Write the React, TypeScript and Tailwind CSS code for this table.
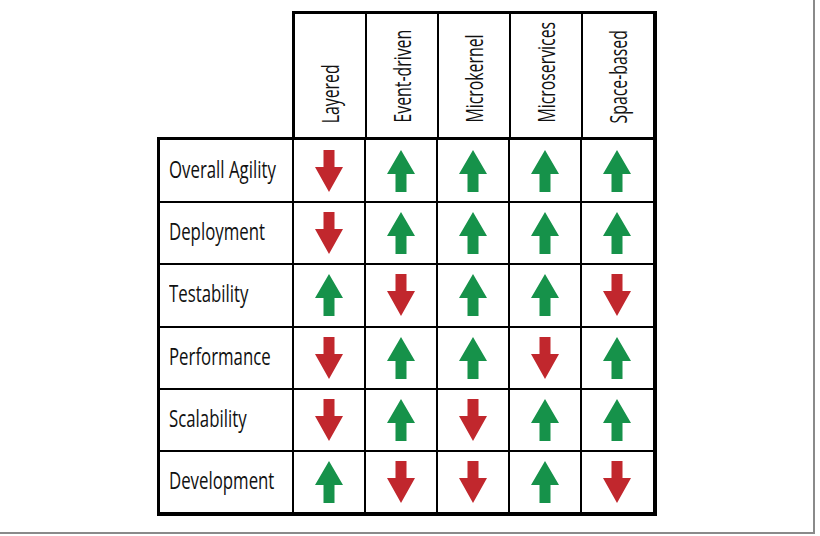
import React from "react";

const cols = ["Layered", "Event-driven", "Microkernel", "Microservices", "Space-based"];
const rows: [string, string][] = [
  ["Overall Agility", "DUUUU"],
  ["Deployment", "DUUUU"],
  ["Testability", "UDUUD"],
  ["Performance", "DUUDU"],
  ["Scalability", "DUDUU"],
  ["Development", "UDDUD"],
];

const font = { fontFamily: '"Open Sans", "Liberation Sans", sans-serif' };

function Arrow({ up }: { up: boolean }) {
  return up ? (
    <svg width="28" height="42" viewBox="0 0 28 42">
      <polygon points="14,0 28,24 19.5,24 19.5,42 8.5,42 8.5,24 0,24" fill="#16924a" />
    </svg>
  ) : (
    <svg width="28" height="42" viewBox="0 0 28 42">
      <polygon points="8.5,0 19.5,0 19.5,17 28,17 14,42 0,17 8.5,17" fill="#c1272d" />
    </svg>
  );
}

export default function App() {
  return (
    <div className="w-[815px] h-[534px] bg-white border-r-2 border-b-2 border-[#8a8a8a]" style={font}>
      <div className="pt-[11px] pl-[157px] flex flex-col">
        {/* header */}
        <div className="ml-[135px] flex border-t-[3px] border-l-[3px] border-r-[4px] border-black w-[365px]">
          {cols.map((c, i) => (
            <div
              key={c}
              className={`h-[123px] flex items-end justify-center pb-[14px] ${i < 4 ? "border-r-2 border-black" : ""}`}
              style={{ width: i < 4 ? 72 : 70 }}
            >
              <div className="origin-bottom scale-y-[0.66]">
                <span className="block [writing-mode:vertical-rl] rotate-180 text-[24px] font-medium leading-none text-[#111]">
                  {c}
                </span>
              </div>
            </div>
          ))}
        </div>
        {/* body */}
        <div className="flex flex-col border-[3px] border-r-[4px] border-b-[4px] border-black w-[500px]">
          {rows.map(([label, vals], r) => (
            <div key={label} className={`flex ${r > 0 ? "border-t-2 border-black" : ""}`} style={{ height: r > 0 ? 62.3 : 61 }}>
              <div className="w-[134px] border-r-2 border-black flex items-center pl-[9px] pb-[4px]">
                <span className="inline-block origin-left scale-x-[0.7] text-[24px] font-medium leading-none text-[#111] whitespace-nowrap">
                  {label}
                </span>
              </div>
              {vals.split("").map((v, i) => (
                <div
                  key={i}
                  className={`flex items-center justify-center ${i < 4 ? "border-r-2 border-black" : ""}`}
                  style={{ width: i < 4 ? 72 : 70 }}
                >
                  <Arrow up={v === "U"} />
                </div>
              ))}
            </div>
          ))}
        </div>
      </div>
    </div>
  );
}
